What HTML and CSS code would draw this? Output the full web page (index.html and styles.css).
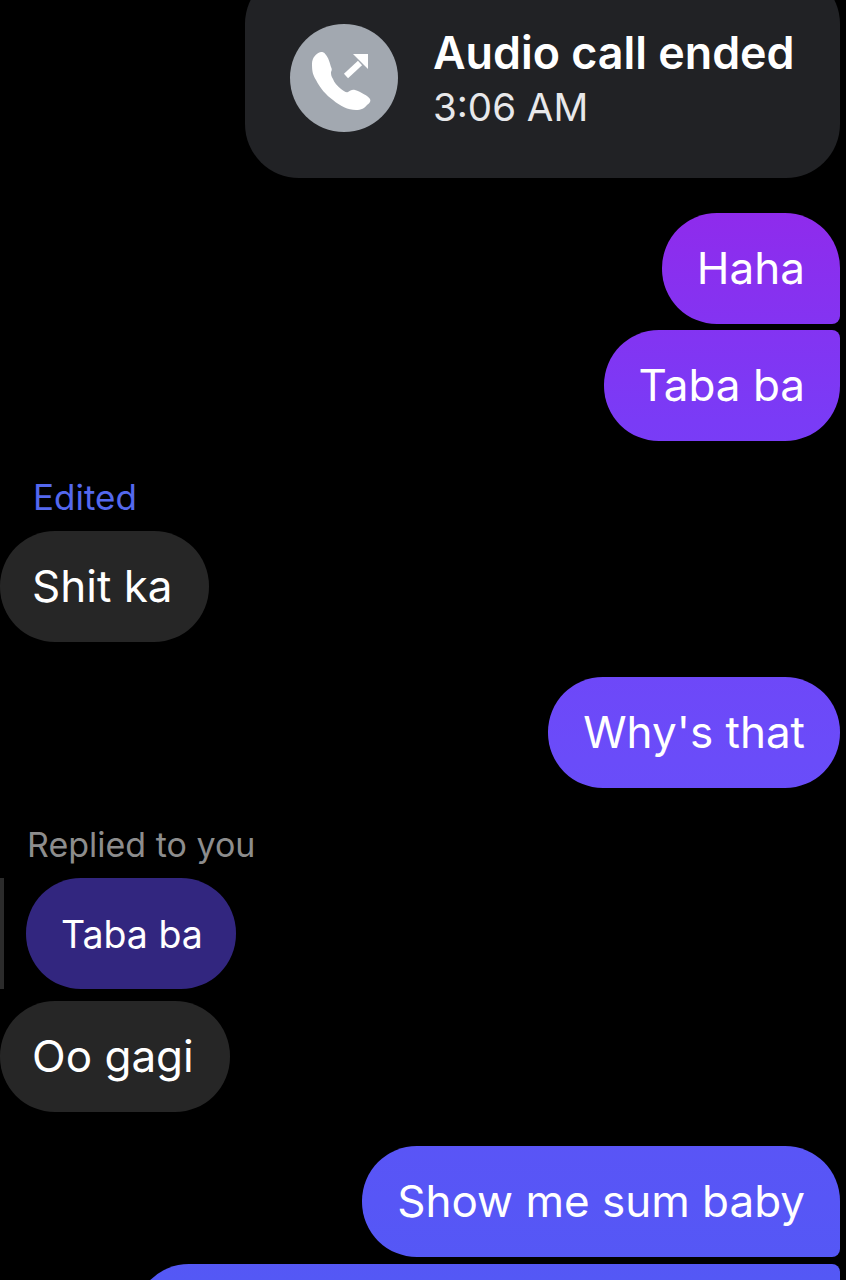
FILE: index.html
```html
<!DOCTYPE html>
<html lang="en">
<head>
  <meta charset="UTF-8">
  <meta name="viewport" content="width=device-width, initial-scale=1.0">
  <title>Chat</title>
  <link rel="stylesheet" href="styles.css">
</head>
<body>
  <div class="thread">
    <div class="call-card">
      <div class="call-icon">
        <svg width="66" height="66" viewBox="0 0 66 66" fill="none">
          <path d="M10 7C5 8 1 13 1 19C1 27 2 30 5 35C9 43 15 50 22 55C29 61 37 65 45 65C50 65 54 63 56 60C59 58 60 56 59 54C57 51 50 47 44 45C41 44 39 46 37 47C35 48 33 46 30 44C26 41 23 37 22 34C20 31 20 29 20 27C21 25 21 24 20 22C19 18 17 12 15 10C13 7 12 7 10 7z" fill="#fff"/>
          <path d="M35 31 49 18" stroke="#fff" stroke-width="6"/>
          <path d="M42 9H57V24z" fill="#fff"/>
        </svg>
      </div>
      <div class="call-text">
        <div class="call-title">Audio call ended</div>
        <div class="call-time">3:06 AM</div>
      </div>
    </div>

    <div class="row out first">
      <div class="bubble sent tail-bottom">Haha</div>
    </div>
    <div class="row out close">
      <div class="bubble sent tail-top">Taba ba</div>
    </div>

    <div class="label edited">Edited</div>
    <div class="row">
      <div class="bubble received">Shit ka</div>
    </div>

    <div class="row out gap">
      <div class="bubble sent">Why's that</div>
    </div>

    <div class="label replied">Replied to you</div>
    <div class="row quote-row">
      <div class="quote-bar"></div>
      <div class="bubble quoted">Taba ba</div>
    </div>
    <div class="row oo">
      <div class="bubble received">Oo gagi</div>
    </div>

    <div class="row out gap last-gap">
      <div class="bubble sent tail-bottom">Show me sum baby</div>
    </div>
    <div class="row out next">
      <div class="bubble sent tail-top partial"></div>
    </div>
  </div>
</body>
</html>
```

FILE: styles.css
```css
html, body {
  margin: 0;
  padding: 0;
  background-color: #000000;
}
body {
  height: 1280px;
  overflow: hidden;
  font-family: Inter, Roboto, sans-serif;
  color: #ffffff;
}
.thread {
  display: flex;
  flex-direction: column;
  height: 1280px;
  padding-right: 6px;
}

/* Call card */
.call-card {
  display: flex;
  flex-shrink: 0;
  align-items: center;
  gap: 35px;
  align-self: flex-end;
  box-sizing: border-box;
  width: 595px;
  height: 208px;
  margin-top: -30px;
  padding: 8px 0 0 45px;
  border-radius: 54px;
  background-color: #212225;
}
.call-icon {
  display: flex;
  align-items: center;
  justify-content: center;
  width: 108px;
  height: 108px;
  border-radius: 50%;
  background-color: #a2a8b0;
}
.call-text {
  display: flex;
  flex-direction: column;
  gap: 4px;
  margin-top: 4px;
}
.call-title {
  font-size: 44.800px;
  font-weight: 600;
  line-height: 50px;
}
.call-time {
  font-size: 38.500px;
  line-height: 50px;
  color: #e8e8ea;
}

/* Rows */
.row {
  display: flex;
  flex-shrink: 0;
}
.row.out {
  justify-content: flex-end;
}
.row.first {
  margin-top: 35px;
}
.row.close {
  margin-top: 6px;
}
.row.gap {
  margin-top: 35px;
}
.row.last-gap {
  margin-top: 34px;
}
.row.oo {
  margin-top: 12px;
}
/* only the top of the next message is on screen */
.row.next {
  height: 16px;
  margin-top: 7px;
  overflow: hidden;
}

/* Bubbles */
.bubble {
  box-sizing: border-box;
  flex-shrink: 0;
  height: 111px;
  padding: 0 35px;
  border-radius: 55px;
  font-size: 44px;
  line-height: 111px;
  white-space: nowrap;
}
.sent {
  background: linear-gradient(180deg, #8f2bec 210px, #7a3bf6 420px, #6a4cf9 760px, #5756f6 1200px, #5458f5 1280px) fixed;
}
.tail-bottom {
  border-bottom-right-radius: 8px;
}
.tail-top {
  border-top-right-radius: 8px;
}
.received {
  padding: 0 36px 0 32px;
  background-color: #262626;
}
.quoted {
  padding-right: 33px;
  font-size: 37.500px;
  line-height: 113px;
  background-color: #32267f;
}
.partial {
  width: 706px;
}

/* Labels above a message */
.label {
  flex-shrink: 0;
  line-height: 40px;
}
.edited {
  margin: 36px 0 14px 33px;
  font-size: 35px;
  color: #5468ee;
}
.replied {
  margin: 37px 0 13px 27px;
  font-size: 34px;
  color: #8d8d8d;
}

/* Reply */
.quote-bar {
  width: 4px;
  margin-right: 22px;
  background-color: #2b2b2b;
}
```
